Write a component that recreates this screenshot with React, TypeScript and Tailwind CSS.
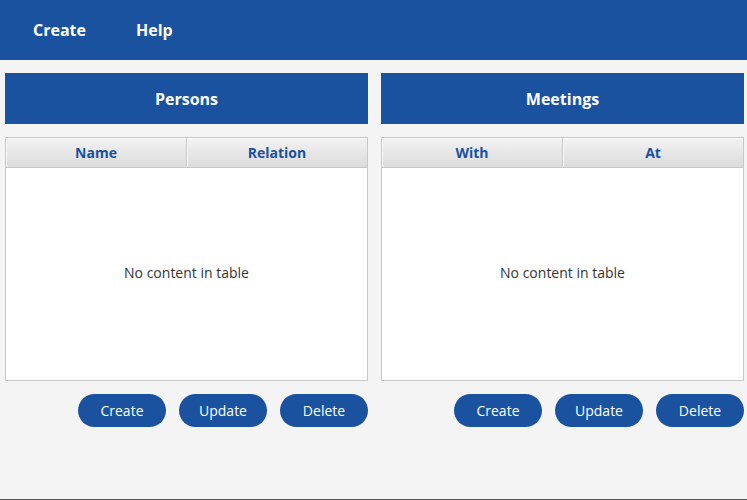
import React from "react";

const font = { fontFamily: '"Open Sans", "Noto Sans", sans-serif' };

function Panel({ title, cols }: { title: string; cols: [string, string] }) {
  return (
    <div className="flex w-[363px] flex-col">
      <div className="flex h-[51px] items-center justify-center bg-[#1a52a0] text-[16px] font-bold text-white">
        {title}
      </div>
      <div className="mt-[13px] flex h-[244px] flex-col border border-[#c8c8c8] bg-white">
        <div className="flex h-[30px] border-b border-[#c8c8c8] bg-gradient-to-b from-[#f2f2f2] to-[#dcdcdc]">
          <div className="flex flex-1 items-center justify-center border-r border-[#c8c8c8] text-[14px] font-bold text-[#1a52a0] shadow-[inset_1px_1px_0_#fafafa]">
            {cols[0]}
          </div>
          <div className="flex flex-1 items-center justify-center text-[14px] font-bold text-[#1a52a0] shadow-[inset_1px_1px_0_#fafafa]">
            {cols[1]}
          </div>
        </div>
        <div className="flex flex-1 items-center justify-center pb-[4px] text-[14px] text-[#333333]">
          No content in table
        </div>
      </div>
      <div className="mt-[13px] flex justify-end gap-[13px]">
        {["Create", "Update", "Delete"].map((b) => (
          <button
            key={b}
            className="flex h-[33px] w-[88px] items-center justify-center rounded-full bg-[#1a52a0] text-[14px] text-white"
          >
            {b}
          </button>
        ))}
      </div>
    </div>
  );
}

export default function App() {
  return (
    <div style={font} className="flex h-[500px] w-[747px] flex-col bg-[#f4f4f4]">
      <div className="flex h-[60px] items-center gap-[50px] bg-[#1a52a0] pl-[33px] text-[16px] font-bold text-white">
        <span>Create</span>
        <span>Help</span>
      </div>
      <div className="mt-[13px] flex gap-[13px] pl-[5px]">
        <Panel title="Persons" cols={["Name", "Relation"]} />
        <Panel title="Meetings" cols={["With", "At"]} />
      </div>
      <div className="mt-auto h-px w-full bg-[#555555]" />
    </div>
  );
}
